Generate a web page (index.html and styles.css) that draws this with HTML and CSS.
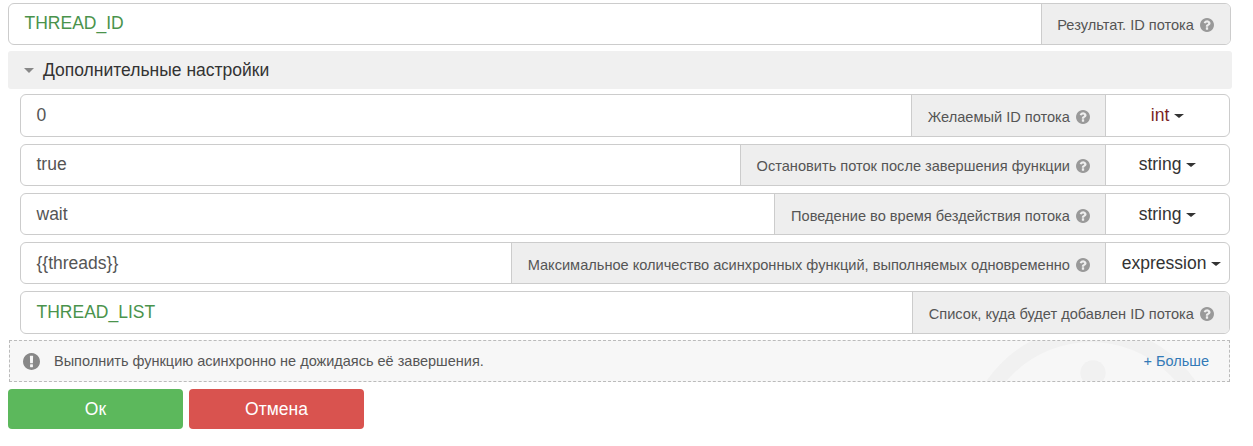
FILE: index.html
```html
<!DOCTYPE html>
<html lang="ru">
<head>
<meta charset="utf-8">
<title>Настройки</title>
<link rel="stylesheet" href="styles.css">
</head>
<body>
<svg class="defs" width="0" height="0" aria-hidden="true">
  <symbol id="q" viewBox="128 128 1536 1536"><path d="M1024 1376v-192q0-14-9-23t-23-9h-192q-14 0-23 9t-9 23v192q0 14 9 23t23 9h192q14 0 23-9t9-23zm256-672q0-88-55.5-163t-138.5-116-170-41q-243 0-371 213-15 24 8 42l132 100q7 6 19 6 16 0 25-12 53-68 86-92 34-24 86-24 48 0 85.5 26t37.5 59q0 38-20 61t-68 45q-63 28-115.5 86.5t-52.5 125.5v36q0 14 9 23t23 9h192q14 0 23-9t9-23q0-19 21.5-49.5t54.5-49.5q32-18 49-28.5t46-35 44.5-48 28-60.5 12.5-81zm384 192q0 209-103 385.5t-279.5 279.5-385.5 103-385.5-103-279.5-279.5-103-385.5 103-385.5 279.5-279.5 385.5-103 385.5 103 279.5 279.5 103 385.5z"/></symbol>
</svg>
<div class="row top">
  <div class="field var">THREAD_ID</div>
  <div class="addon">Результат. ID потока <svg class="q"><use href="#q"/></svg></div>
</div>
<div class="section"><span class="caret-big"></span>Дополнительные настройки</div>
<div class="group">
  <div class="row">
    <div class="field">0</div>
    <div class="addon">Желаемый ID потока <svg class="q"><use href="#q"/></svg></div>
    <div class="type int">int <span class="caret"></span></div>
  </div>
  <div class="row">
    <div class="field">true</div>
    <div class="addon">Остановить поток после завершения функции <svg class="q"><use href="#q"/></svg></div>
    <div class="type">string <span class="caret"></span></div>
  </div>
  <div class="row">
    <div class="field">wait</div>
    <div class="addon">Поведение во время бездействия потока <svg class="q"><use href="#q"/></svg></div>
    <div class="type">string <span class="caret"></span></div>
  </div>
  <div class="row">
    <div class="field">{{threads}}</div>
    <div class="addon">Максимальное количество асинхронных функций, выполняемых одновременно <svg class="q"><use href="#q"/></svg></div>
    <div class="type wide">expression <span class="caret"></span></div>
  </div>
  <div class="row">
    <div class="field var">THREAD_LIST</div>
    <div class="addon">Список, куда будет добавлен ID потока <svg class="q"><use href="#q"/></svg></div>
  </div>
</div>
<div class="info">
  <svg class="mark" viewBox="128 128 1536 1536"><path d="M896 128q209 0 385 103t279 279 103 386-103 385.5-279 279.5-385 103-385.5-103-279.5-279.5-103-385.5 103-386 279.5-279 385.5-103zm128 1247v-190q0-14-9-23.5t-22-9.5h-192q-13 0-23 10t-10 23v190q0 13 10 23t23 10h192q13 0 22-9.5t9-23.5zm-2-344l18-621q0-12-10-18-10-8-24-8h-220q-14 0-24 8-10 6-10 18l17 621q0 10 10 17.5t24 7.5h185q14 0 23.5-7.5t10.5-17.5z"/></svg>
  <span class="desc">Выполнить функцию асинхронно не дожидаясь её завершения.</span>
  <a class="more">+ Больше</a>
  <svg class="water" viewBox="0 0 260 260"><circle cx="130" cy="130" r="119" fill="none" stroke="#f1f1f1" stroke-width="16"/><circle cx="132" cy="50" r="12.7" fill="#f1f1f1"/></svg>
</div>
<div class="actions">
  <button class="btn ok">Ок</button>
  <button class="btn cancel">Отмена</button>
</div>
</body>
</html>
```
FILE: styles.css
```css
* { box-sizing: border-box; }
html, body { margin: 0; padding: 0; }
body {
  padding: 3px 21px 0 8px;
  background: #fff;
  font-family: "Liberation Sans", Arial, sans-serif;
  color: #555;
  width: 1253px;
  height: 446px;
  overflow: hidden;
}
.defs { position: absolute; }
.row {
  display: flex;
  height: 42px;
  border: 1px solid #ccc;
  border-radius: 6px;
  background: #fff;
  overflow: hidden;
}
.group .row:first-child, .group .row:last-child { height: 43px; }
.top { width: 1223px; }
.field {
  flex: 1;
  padding-left: 15.5px;
  font-size: 17.5px;
  line-height: 39px;
  color: #555;
}
.group .field { line-height: 40px; }
.var { color: #4a934c; }
.addon {
  display: flex;
  align-items: center;
  gap: 2px;
  padding: 1px 15px 0 16px;
  background: #eee;
  border-left: 1px solid #ccc;
  font-size: 14.6px;
  color: #555;
  white-space: pre;
}
.top .addon { padding-right: 16px; padding-left: 15px; }
.group .addon { padding-top: 3px; }
.q { width: 14px; height: 14px; fill: #999; flex: none; }
.type {
  width: 124px;
  border-left: 1px solid #ccc;
  text-align: center;
  font-size: 17.5px;
  line-height: 40px;
  color: #333;
}
.group .row:nth-child(2) .field, .group .row:nth-child(2) .type { line-height: 38px; }
.group .row:nth-child(2) .addon { padding-top: 1px; }
.wide { padding-left: 8px; }
.int { color: #7a1f1f; }
.caret {
  display: inline-block;
  vertical-align: middle;
  border-top: 4.5px solid #333;
  border-left: 5px solid transparent;
  border-right: 5px solid transparent;
}
.section {
  display: flex;
  align-items: center;
  height: 38px;
  margin: 6px 0 5px 0;
  padding-left: 16px;
  background: #f0f0f0;
  border-radius: 3px;
  font-size: 17.5px;
  color: #333;
}
.caret-big {
  border-top: 5.5px solid #888;
  border-left: 5.5px solid transparent;
  border-right: 5.5px solid transparent;
  margin-right: 9px;
}
.group { display: flex; flex-direction: column; gap: 7px; margin: 0 2px 0 12px; }
.info {
  position: relative;
  display: flex;
  align-items: center;
  height: 42px;
  margin: 6px 2px 7px 1px;
  padding: 0 20px 0 13px;
  background: #f7f7f7;
  border: 1px dashed #bbb;
  overflow: hidden;
  font-size: 14.5px;
}
.mark { width: 17px; height: 17px; fill: #888; margin-right: 14px; flex: none; }
.desc { flex: 1; }
.more { color: #337ab7; position: relative; z-index: 1; }
.water { position: absolute; left: 951px; top: -18px; width: 260px; height: 260px; }
.actions { display: flex; gap: 6px; }
.btn {
  width: 175px;
  height: 40px;
  border: 0;
  border-radius: 4px;
  color: #fff;
  font: 17.5px "Liberation Sans", Arial, sans-serif;
}
.ok { background: #5cb85c; }
.cancel { background: #d9534f; }
```
